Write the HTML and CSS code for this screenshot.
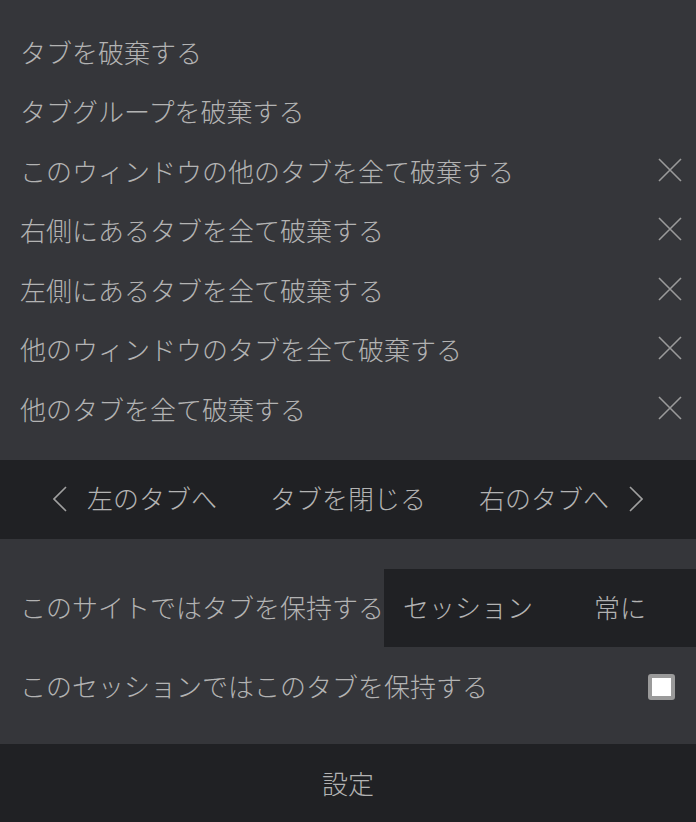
FILE: index.html
```html
<!DOCTYPE html>
<html lang="ja">
<head>
<meta charset="utf-8">
<title>タブ</title>
<link rel="stylesheet" href="styles.css">
</head>
<body>
<div class="popup">
  <ul class="discard-list">
    <li class="row"><span>タブを破棄する</span></li>
    <li class="row"><span>タブグループを破棄する</span></li>
    <li class="row"><span>このウィンドウの他のタブを全て破棄する</span><svg class="x" viewBox="0 0 24 24"><path d="M1 1L23 23M23 1L1 23"/></svg></li>
    <li class="row"><span>右側にあるタブを全て破棄する</span><svg class="x" viewBox="0 0 24 24"><path d="M1 1L23 23M23 1L1 23"/></svg></li>
    <li class="row"><span>左側にあるタブを全て破棄する</span><svg class="x" viewBox="0 0 24 24"><path d="M1 1L23 23M23 1L1 23"/></svg></li>
    <li class="row"><span>他のウィンドウのタブを全て破棄する</span><svg class="x" viewBox="0 0 24 24"><path d="M1 1L23 23M23 1L1 23"/></svg></li>
    <li class="row"><span>他のタブを全て破棄する</span><svg class="x" viewBox="0 0 24 24"><path d="M1 1L23 23M23 1L1 23"/></svg></li>
  </ul>
  <nav class="nav">
    <div class="nav-item"><svg class="chev" viewBox="0 0 14 26"><polyline points="13,1 1,13 13,25"/></svg><span>左のタブへ</span></div>
    <div class="nav-item"><span>タブを閉じる</span></div>
    <div class="nav-item"><span>右のタブへ</span><svg class="chev" viewBox="0 0 14 26"><polyline points="1,1 13,13 1,25"/></svg></div>
  </nav>
  <section class="keep">
    <div class="keep-row">
      <span class="label">このサイトではタブを保持する</span>
      <div class="select">
        <div class="opt">セッション</div>
        <div class="opt">常に</div>
      </div>
    </div>
    <div class="check-row">
      <span class="label">このセッションではこのタブを保持する</span>
      <span class="checkbox"></span>
    </div>
  </section>
  <footer class="footer">設定</footer>
</div>
</body>
</html>
```
FILE: styles.css
```css
html, body {
  margin: 0;
  padding: 0;
  background: #35363a;
}
body {
  font-family: "Noto Sans CJK JP", "Noto Sans", sans-serif;
  font-weight: 300;
  font-size: 26px;
  color: #b3b3b3;
  width: 696px;
  height: 822px;
  overflow: hidden;
}
.popup {
  display: flex;
  flex-direction: column;
}
.discard-list {
  list-style: none;
  margin: 0;
  padding: 21px 0 22px 0;
}
.row {
  height: 59.5px;
  display: flex;
  align-items: center;
  justify-content: space-between;
  padding: 0 14px 0 20px;
  line-height: 1;
}
.row span {
  position: relative;
  top: 1px;
}
.x {
  width: 24px;
  height: 24px;
  fill: none;
  stroke: #9a9a9a;
  stroke-width: 1.6;
}
.nav {
  height: 79px;
  background: #202124;
  display: flex;
  align-items: center;
  justify-content: space-evenly;
  line-height: 1;
}
.nav-item {
  display: flex;
  align-items: center;
  gap: 20px;
}
.nav-item span {
  position: relative;
  top: -1px;
}
.chev {
  width: 14px;
  height: 26px;
  fill: none;
  stroke: #a0a0a0;
  stroke-width: 1.6;
}
.keep {
  padding: 30px 0 17px 0;
  display: flex;
  flex-direction: column;
}
.keep-row {
  height: 78px;
  display: flex;
  align-items: center;
  padding-left: 20px;
  line-height: 1;
}
.label {
  position: relative;
  top: -1px;
}
.select {
  flex: 1;
  align-self: stretch;
  background: #202124;
  display: flex;
  padding-left: 8px;
}
.opt {
  flex: 1;
  display: flex;
  align-items: center;
  justify-content: center;
  position: relative;
  top: -1px;
}
.check-row {
  height: 80px;
  display: flex;
  align-items: center;
  justify-content: space-between;
  padding: 0 21px 0 20px;
  line-height: 1;
}
.checkbox {
  width: 19px;
  height: 18px;
  border: 4px solid #9a9a9a;
  border-radius: 3px;
  background: #ffffff;
}
.footer {
  height: 78px;
  background: #202124;
  display: flex;
  align-items: center;
  justify-content: center;
  line-height: 1;
}
```
